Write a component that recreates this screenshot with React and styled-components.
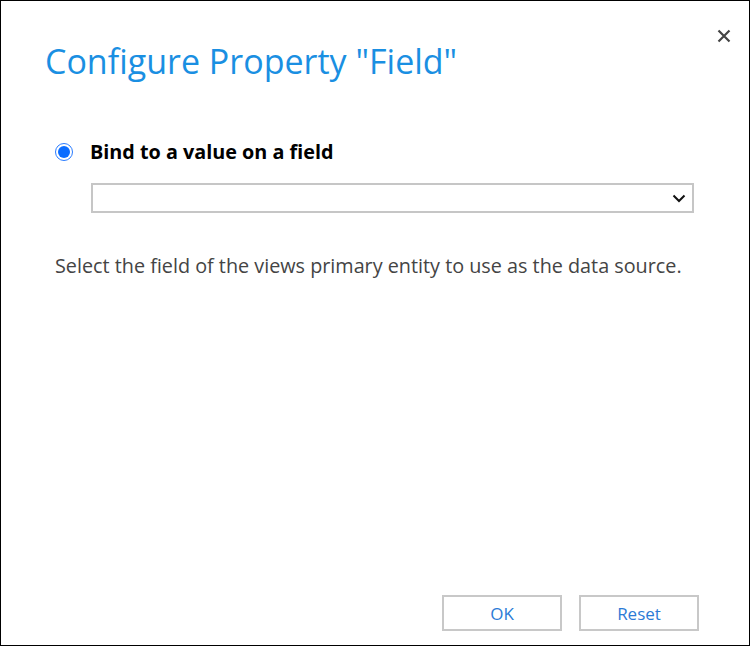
import React from 'react';
import styled, { createGlobalStyle } from 'styled-components';

const GlobalStyle = createGlobalStyle`
  html, body {
    margin: 0;
    padding: 0;
    background: #ffffff;
  }
  body {
    font-family: "Open Sans", "Noto Sans", sans-serif;
  }
`;

const Dialog = styled.div`
  box-sizing: border-box;
  width: 750px;
  height: 646px;
  border: 1px solid #000;
  background: #fff;
  position: relative;
  display: flex;
  flex-direction: column;
`;

const CloseButton = styled.button`
  position: absolute;
  top: 25px;
  right: 15px;
  width: 20px;
  height: 20px;
  padding: 0;
  border: none;
  background: transparent;
  cursor: pointer;
  display: flex;
  align-items: center;
  justify-content: center;
`;

const Title = styled.h1`
  margin: 36px 0 0 44px;
  font-family: "Open Sans", "Noto Sans", sans-serif;
  font-weight: 400;
  font-size: 34px;
  line-height: 48px;
  color: #1a8fe2;
`;

const Body = styled.div`
  flex: 1;
  padding: 0 0 0 54px;
  display: flex;
  flex-direction: column;
`;

const RadioRow = styled.label`
  display: flex;
  align-items: center;
  gap: 17px;
  margin-top: 53px;
  cursor: pointer;
`;

const Radio = styled.span`
  box-sizing: border-box;
  width: 18px;
  height: 18px;
  border-radius: 50%;
  border: 1.5px solid #2a7cff;
  display: flex;
  align-items: center;
  justify-content: center;

  &::after {
    content: '';
    width: 12px;
    height: 12px;
    border-radius: 50%;
    background: #0a6cff;
  }
`;

const RadioLabel = styled.span`
  font-family: "Open Sans", "Noto Sans", sans-serif;
  font-weight: 700;
  font-size: 19.8px;
  color: #000;
`;

const Select = styled.div`
  box-sizing: border-box;
  margin: 18px 0 0 36px;
  width: 603px;
  height: 30px;
  border: 2px solid #c6c6c6;
  display: flex;
  align-items: center;
  justify-content: flex-end;
  padding-right: 6px;
`;

const Hint = styled.p`
  margin: 39px 0 0 0;
  font-family: "Open Sans", "Noto Sans", sans-serif;
  font-weight: 400;
  font-size: 19.8px;
  color: #444;
`;

const Footer = styled.div`
  display: flex;
  justify-content: flex-end;
  gap: 17px;
  padding: 0 50px 14px 0;
`;

const Button = styled.button`
  box-sizing: border-box;
  width: 120px;
  height: 36px;
  border: 2px solid #c8c8c8;
  background: #fff;
  font-family: "Open Sans", "Noto Sans", sans-serif;
  font-size: 17px;
  color: #2b7bd6;
  cursor: pointer;
`;

export default function App() {
  return (
    <>
      <GlobalStyle />
      <Dialog>
        <CloseButton aria-label="Close">
          <svg width="14" height="14" viewBox="0 0 14 14">
            <path d="M1.5 1.5 L12.5 12.5 M12.5 1.5 L1.5 12.5" stroke="#444" strokeWidth="2.2" />
          </svg>
        </CloseButton>
        <Title>Configure Property "Field"</Title>
        <Body>
          <RadioRow>
            <Radio />
            <RadioLabel>Bind to a value on a field</RadioLabel>
          </RadioRow>
          <Select>
            <svg width="14" height="9" viewBox="0 0 14 9">
              <path d="M1.5 1.5 L7 7 L12.5 1.5" fill="none" stroke="#111" strokeWidth="2" />
            </svg>
          </Select>
          <Hint>Select the field of the views primary entity to use as the data source.</Hint>
        </Body>
        <Footer>
          <Button>OK</Button>
          <Button>Reset</Button>
        </Footer>
      </Dialog>
    </>
  );
}
